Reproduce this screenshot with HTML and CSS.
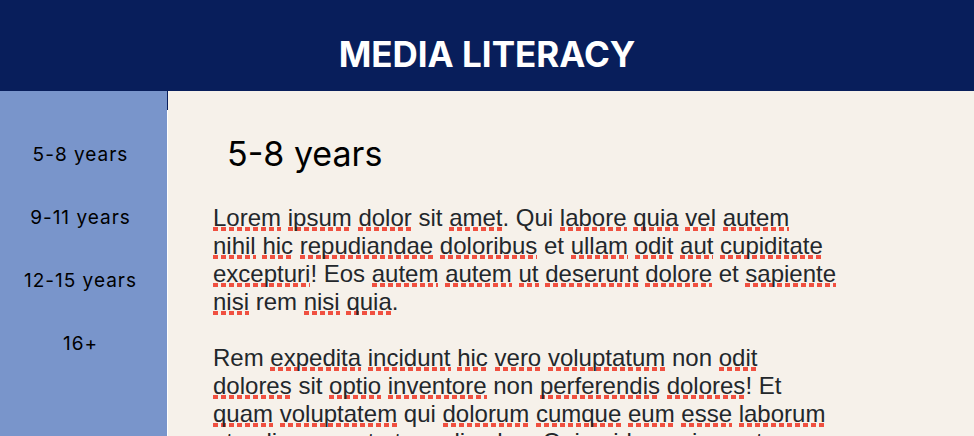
FILE: index.html
```
<!DOCTYPE html>
<html lang="en">
<head>
<meta charset="utf-8">
<meta name="viewport" content="width=device-width, initial-scale=1">
<title>Media Literacy</title>
<link rel="stylesheet" href="styles.css">
</head>
<body>
<header class="masthead"><h1>MEDIA LITERACY</h1></header>
<div class="layout">
<nav class="sidebar" aria-label="Age groups">
<a href="#age-5">5-8 years</a>
<a href="#age-9">9-11 years</a>
<a href="#age-12">12-15 years</a>
<a href="#age-16">16+</a>
</nav>
<main class="content">
<h2 id="age-5">5-8 years</h2>
<p><u>Lorem</u> <u>ipsum</u> <u>dolor</u> sit <u>amet</u>. Qui <u>labore</u> <u>quia</u> <u>vel</u> <u>autem</u><br>
<u>nihil</u> <u>hic</u> <u>repudiandae</u> <u>doloribus</u> et <u>ullam</u> <u>odit</u> <u>aut</u> <u>cupiditate</u><br>
<u>excepturi</u>! Eos <u>autem</u> <u>autem</u> <u>ut</u> <u>deserunt</u> <u>dolore</u> et <u>sapiente</u><br>
<u>nisi</u> rem <u>nisi</u> <u>quia</u>.</p>
<p>Rem <u>expedita</u> <u>incidunt</u> <u>hic</u> <u>vero</u> <u>voluptatum</u> non <u>odit</u><br>
<u>dolores</u> sit <u>optio</u> <u>inventore</u> non <u>perferendis</u> <u>dolores</u>! Et<br>
<u>quam</u> <u>voluptatem</u> qui <u>dolorum</u> <u>cumque</u> <u>eum</u> <u>esse</u> <u>laborum</u><br>
et <u>galisum</u> <u>sunt</u> et ea alias <u>hoc</u> Qui <u>quidem</u> minus et</p>
</main>
</div>
</body>
</html>
```
FILE: styles.css
```
* { box-sizing: border-box; }
html, body { height: 100%; }
body {
  margin: 0;
  display: flex;
  flex-direction: column;
  overflow: hidden;
  background: #f6f1ea;
  font-family: Inter, sans-serif;
  color: #000;
}
.masthead {
  flex: none;
  padding: 32px 16px 15px;
  background: #081e5b;
  color: #fff;
  text-align: center;
}
h1 {
  margin: 0;
  font-size: 35px;
  line-height: 44px;
  font-weight: 700;
}
.layout {
  flex: 1;
  min-height: 0;
  display: grid;
  grid-template-columns: 168px 1fr;
}
.sidebar {
  display: flex;
  flex-direction: column;
  gap: 39px;
  padding: 52px 6px 0 0;
  background: #7995cb;
  border-right: 1px solid;
  border-image: linear-gradient(#081e5b 20px, #fff 20px) 1;
}
.sidebar a {
  color: #000;
  font-size: 19px;
  line-height: 24px;
  letter-spacing: 1px;
  text-align: center;
  text-decoration: none;
}
.content {
  min-width: 0;
  padding: 41px 45px 0;
  overflow: hidden;
}
h2 {
  margin: 0 0 28px;
  padding-left: 14px;
  font-size: 34px;
  line-height: 44px;
  font-weight: 400;
}
p {
  margin: 0 0 28px;
  color: #23272b;
  font: 24px/28px "Liberation Sans", Arial, sans-serif;
}
u {
  text-decoration: none;
  background: repeating-linear-gradient(90deg, #f05040 0 5px, transparent 5px 8px) left bottom / 100% 4px no-repeat;
}
```
